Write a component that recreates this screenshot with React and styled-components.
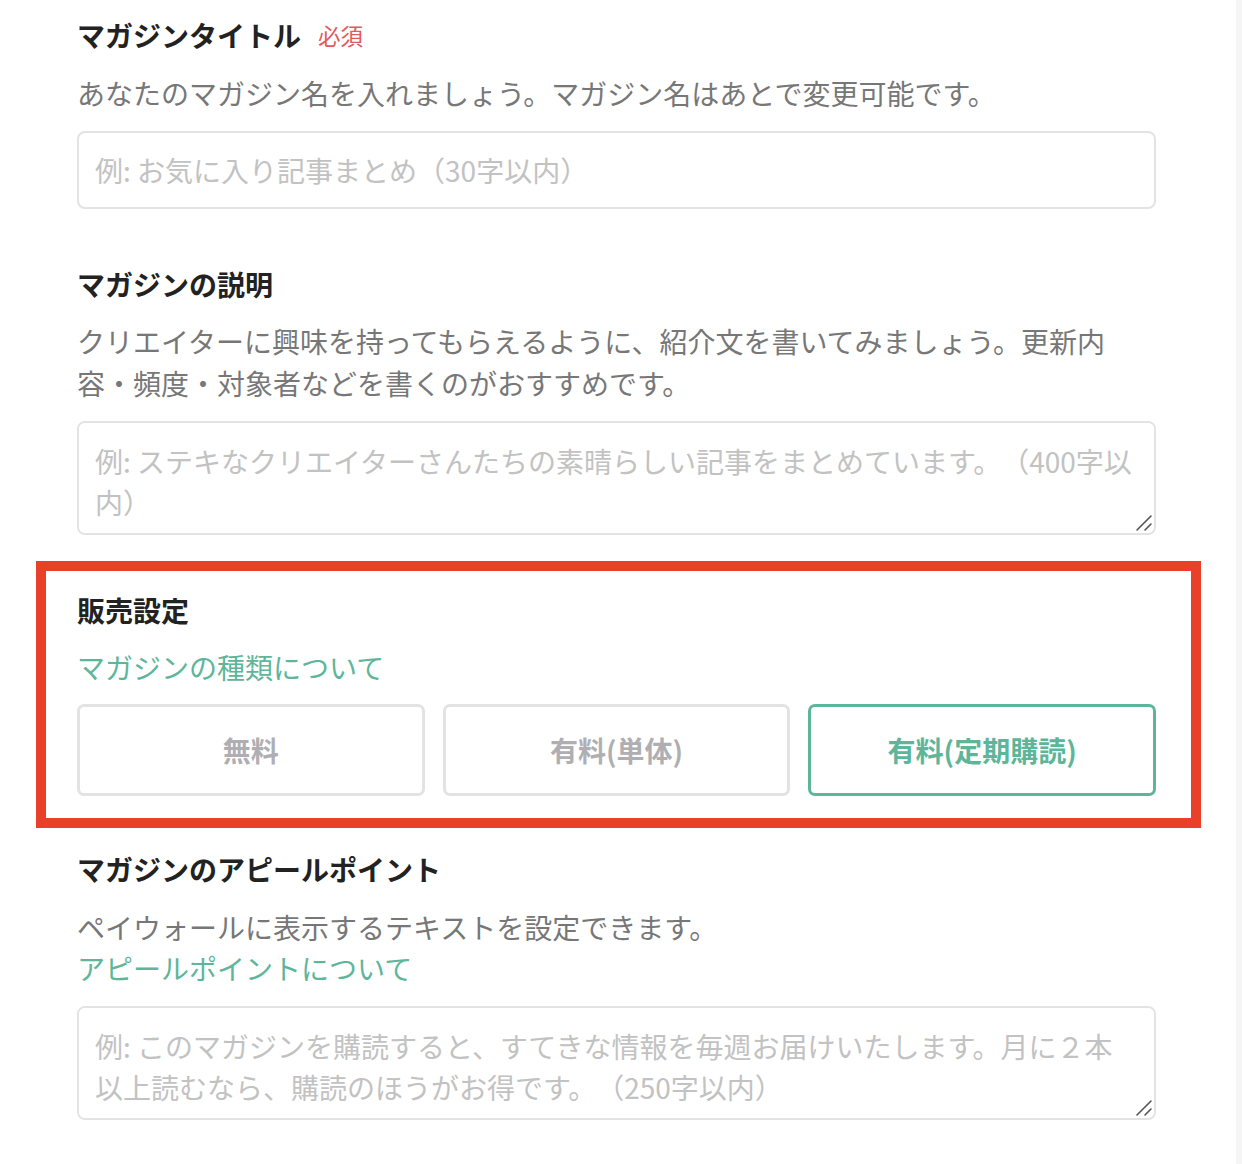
import React from 'react';
import styled, { createGlobalStyle } from 'styled-components';

const GlobalStyle = createGlobalStyle`
  html, body {
    margin: 0;
    padding: 0;
    background: #fff;
  }
  body {
    font-family: "Noto Sans CJK JP", "Noto Sans", sans-serif;
    -webkit-font-smoothing: antialiased;
    text-spacing-trim: space-all;
  }
  * {
    box-sizing: border-box;
  }
`;

const Page = styled.div`
  display: flex;
  width: 1242px;
  min-height: 1164px;
`;

const Main = styled.main`
  flex: 1;
  padding: 15px 80px 43px 77px;
`;

const ScrollTrack = styled.div`
  width: 6px;
  background: #f5f5f5;
`;

const Section = styled.section`
  margin-top: ${(props) => props.top || 0}px;
`;

const SaleBox = styled.section`
  margin: 26px -45px 0 -41px;
  padding: 19px 35px 22px 31px;
  border: 10px solid #e9402a;
`;

const TitleRow = styled.div`
  display: flex;
  align-items: center;
  gap: 17px;
  height: 40px;
`;

const Title = styled.h2`
  margin: 0;
  font-size: 28px;
  font-weight: 700;
  line-height: 40px;
  color: #222;
`;

const Required = styled.span`
  font-size: 22.5px;
  line-height: 40px;
  color: #e05a5c;
`;

const Desc = styled.p`
  margin: ${(props) => props.top || 16}px 0 0;
  max-width: 1050px;
  font-size: 28px;
  line-height: ${(props) => props.lh || 41.5}px;
  color: #777;
`;

const HelpLink = styled.a`
  display: block;
  color: #5db69a;
  text-decoration: none;
  cursor: pointer;
`;

const TypeLink = styled(HelpLink)`
  margin-top: 16px;
  font-size: 28px;
  line-height: 42px;
`;

const TextInput = styled.input`
  display: block;
  width: 100%;
  height: 78px;
  margin-top: ${(props) => props.top || 16}px;
  padding: 0 16px;
  border: 2px solid #e3e3e3;
  border-radius: 8px;
  font-family: inherit;
  font-size: 28px;
  color: #333;
  outline: none;
  text-spacing-trim: space-all;
  &::placeholder {
    color: #c2c2c2;
  }
`;

const AreaWrap = styled.div`
  position: relative;
  margin-top: ${(props) => props.top || 17}px;
`;

const TextArea = styled.textarea`
  display: block;
  width: 100%;
  height: 114px;
  padding: 18px 6px 12px 16px;
  border: 2px solid #e3e3e3;
  border-radius: 8px;
  font-family: inherit;
  font-size: 28px;
  line-height: 41px;
  color: #333;
  outline: none;
  resize: none;
  text-spacing-trim: space-all;
  &::placeholder {
    color: #c2c2c2;
  }
`;

const Grip = styled.svg`
  position: absolute;
  right: 3px;
  bottom: 3px;
  width: 18px;
  height: 18px;
  pointer-events: none;
`;

const TypeGrid = styled.div`
  display: grid;
  grid-template-columns: repeat(3, 1fr);
  gap: 18px;
  margin-top: 16px;
`;

const TypeButton = styled.button`
  height: 92px;
  border: 3px solid ${(props) => (props.active ? '#5db69a' : '#e3e3e3')};
  border-radius: 7px;
  background: #fff;
  font-family: inherit;
  font-size: 28px;
  font-weight: 700;
  color: ${(props) => (props.active ? '#5db69a' : '#afafb3')};
  cursor: pointer;
`;

function ResizableArea({ top, placeholder }) {
  return (
    <AreaWrap top={top}>
      <TextArea placeholder={placeholder} />
      <Grip viewBox="0 0 18 18">
        <path d="M2 16 L16 2 M10 16 L16 10" stroke="#555" strokeWidth="1.6" strokeLinecap="round" />
      </Grip>
    </AreaWrap>
  );
}

export default function App() {
  const types = ['無料', '有料(単体)', '有料(定期購読)'];

  return (
    <Page>
      <GlobalStyle />
      <Main>
        <Section>
          <TitleRow>
            <Title>マガジンタイトル</Title>
            <Required>必須</Required>
          </TitleRow>
          <Desc top={18}>
            あなたのマガジン名を入れましょう。マガジン名はあとで変更可能です。
          </Desc>
          <TextInput top={16} placeholder="例: お気に入り記事まとめ（30字以内）" />
        </Section>

        <Section top={55}>
          <Title>マガジンの説明</Title>
          <Desc top={16} lh={42}>
            クリエイターに興味を持ってもらえるように、紹介文を書いてみましょう。更新内容・頻度・対象者などを書くのがおすすめです。
          </Desc>
          <ResizableArea
            top={17}
            placeholder={'例: ステキなクリエイターさんたちの素晴らしい記事をまとめています。（400字以\n内）'}
          />
        </Section>

        <SaleBox>
          <Title>販売設定</Title>
          <TypeLink>マガジンの種類について</TypeLink>
          <TypeGrid>
            {types.map((t, i) => (
              <TypeButton key={t} active={i === 2}>
                {t}
              </TypeButton>
            ))}
          </TypeGrid>
        </SaleBox>

        <Section top={21}>
          <Title>マガジンのアピールポイント</Title>
          <Desc top={18} lh={41}>
            ペイウォールに表示するテキストを設定できます。
            <HelpLink>アピールポイントについて</HelpLink>
          </Desc>
          <ResizableArea
            top={17}
            placeholder={'例: このマガジンを購読すると、すてきな情報を毎週お届けいたします。月に２本\n以上読むなら、購読のほうがお得です。（250字以内）'}
          />
        </Section>
      </Main>
      <ScrollTrack />
    </Page>
  );
}
